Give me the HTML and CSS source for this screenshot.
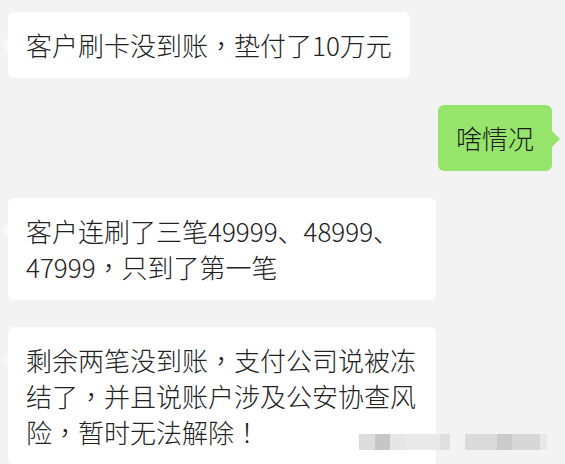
FILE: index.html
```html
<!DOCTYPE html>
<html lang="zh-CN">
<head>
    <meta charset="UTF-8">
    <meta name="viewport" content="width=device-width, initial-scale=1.0">
    <title>聊天记录</title>
    <link rel="stylesheet" href="styles.css">
</head>
<body>

<!-- 全角逗号用繁体字形，居中显示，和截图一致 -->
<div class="chat">
    <div class="msg left">客户刷卡没到账<span class="punc" lang="zh-TW">，</span>垫付了10万元</div>
    <div class="msg right">啥情况</div>
    <div class="msg left">客户连刷了三笔49999、48999、47999<span class="punc" lang="zh-TW">，</span>只到了第一笔</div>
    <div class="msg left">剩余两笔没到账<span class="punc" lang="zh-TW">，</span>支付公司说被冻结了<span class="punc" lang="zh-TW">，</span>并且说账户涉及公安协查风险<span class="punc" lang="zh-TW">，</span>暂时无法解除<span class="punc" lang="zh-TW">！</span></div>
</div>

<!-- 打码的水印 -->
<div class="mosaic">
    <div class="block one">
        <span class="m1"></span><span class="m2"></span><span class="m3"></span><span class="m4"></span><span class="m5"></span>
    </div>
    <div class="block two">
        <span class="n1"></span><span class="n2"></span><span class="n3"></span><span class="n4"></span>
    </div>
</div>

</body>
</html>
```

FILE: styles.css
```css
html, body {
    margin: 0;
    padding: 0;
    height: 100%;
    overflow: hidden;
}
body {
    background: #f3f3f3;
    font-family: "Noto Sans CJK SC", "Microsoft YaHei", sans-serif;
    color: #222;
    position: relative;
}
.chat {
    display: flex;
    flex-direction: column;
    gap: 27px;
    padding: 12px 13px 0 8px;
}
.msg {
    position: relative;
    box-sizing: border-box;
    max-width: 428px;
    padding: 15px 18px;
    font-size: 26px;
    font-weight: 300;
    line-height: 36px;
    border-radius: 6px;
}
.punc {
    font-family: "Noto Sans CJK TC", "Noto Sans CJK SC", sans-serif;
}
.left {
    align-self: flex-start;
    background: #ffffff;
}
.right {
    align-self: flex-end;
    background: #96e46c;
    color: #1a1a1a;
}
.left::before {
    content: "";
    position: absolute;
    left: -7px;
    top: 26px;
    border-style: solid;
    border-width: 7px 7px 7px 0;
    border-color: transparent #f9f9f9 transparent transparent;
}
.right::after {
    content: "";
    position: absolute;
    right: -8px;
    top: 26px;
    border-style: solid;
    border-width: 8px 0 8px 8px;
    border-color: transparent transparent transparent #96e46c;
}
.mosaic {
    position: absolute;
    top: 434px;
    left: 359px;
    display: flex;
    gap: 15px;
}
.block {
    display: flex;
    height: 16px;
    filter: blur(0.6px);
}
.block span {
    display: block;
    height: 100%;
}
.m1 { width: 16px; background: #dcdcdc; }
.m2 { width: 15px; background: #c6c6c6; }
.m3 { width: 15px; background: #e6e6e6; }
.m4 { width: 35px; background: #e9e9e9; }
.m5 { width: 10px; background: #dfdfdf; }
.n1 { width: 32px; background: #dadada; }
.n2 { width: 15px; background: #cbcbcb; }
.n3 { width: 28px; background: #d7d7d7; }
.n4 { width: 7px; background: #e8e8e8; }
```
